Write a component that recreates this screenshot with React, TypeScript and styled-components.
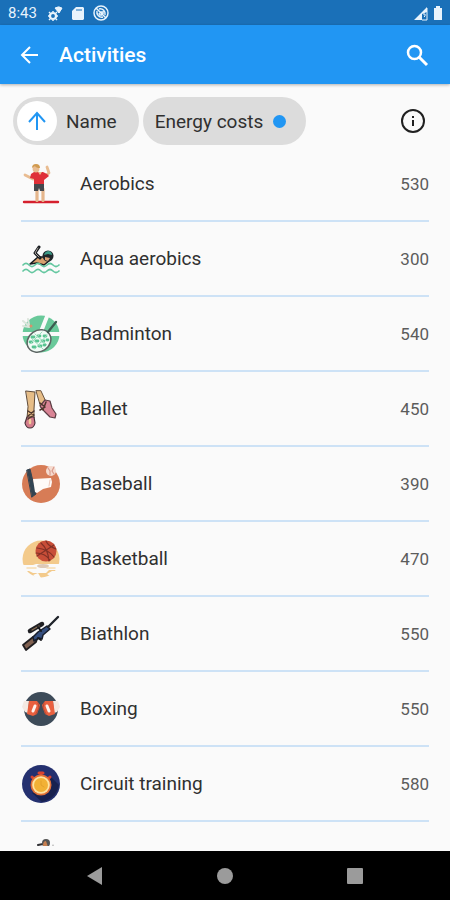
import React from "react";
import styled, { createGlobalStyle } from "styled-components";

const GlobalStyle = createGlobalStyle`
  * { box-sizing: border-box; }
  body { margin: 0; background: #fafafa; font-family: Roboto, "Liberation Sans", sans-serif; }
  button { font: inherit; color: inherit; border: 0; padding: 0; background: none; cursor: pointer; }
  svg { display: block; flex: none; }
`;

const Screen = styled.div`
  display: flex;
  flex-direction: column;
  height: 100vh;
  overflow: hidden;
  color: #303030;
`;

const StatusBar = styled.div`
  display: flex;
  align-items: center;
  gap: 8px;
  flex: none;
  height: 25px;
  padding: 1px 7px 0 8px;
  background: #1a70b8;
  color: #e8f3fc;
  font-size: 15px;
`;

const StatusGroup = styled.div<{ $end?: boolean }>`
  display: flex;
  align-items: center;
  gap: ${(p) => (p.$end ? 5 : 8)}px;
  margin-left: ${(p) => (p.$end ? "auto" : "3px")};
`;

const AppBar = styled.header`
  display: flex;
  align-items: center;
  flex: none;
  height: 59px;
  padding: 0 20px 0 18px;
  background: #2196f3;
  color: #fff;
  box-shadow: 0 1px 3px rgba(0, 0, 0, 0.3);
  z-index: 1;
`;

const Title = styled.h1`
  flex: 1;
  margin: 0 0 0 17px;
  font-size: 21px;
  font-weight: 500;
  line-height: 24px;
`;

const IconButton = styled.button`
  display: flex;
  align-items: center;
  justify-content: center;
`;

const SortBar = styled.div`
  display: flex;
  align-items: center;
  gap: 4px;
  flex: none;
  padding: 13px 23px 2px 13px;
  & > :last-child { margin-left: auto; }
`;

const Chip = styled.button<{ $leading?: boolean }>`
  display: flex;
  align-items: center;
  gap: ${(p) => (p.$leading ? 9 : 10)}px;
  height: 48px;
  padding: ${(p) => (p.$leading ? "0 22px 0 4px" : "0 20px 0 12px")};
  border-radius: 24px;
  background: #dcdcdc;
  font-size: 19px;
`;

const ChipAvatar = styled.span`
  display: flex;
  align-items: center;
  justify-content: center;
  width: 40px;
  height: 40px;
  border-radius: 50%;
  background: #fff;
`;

const Dot = styled.span`
  width: 13px;
  height: 13px;
  border-radius: 50%;
  background: #2196f3;
`;

const Main = styled.main`
  flex: 1;
  min-height: 0;
  padding-bottom: 5px;
`;

const List = styled.ul`
  height: 100%;
  margin: 0;
  padding: 0 21px;
  overflow: hidden;
  list-style: none;
`;

const Row = styled.li`
  display: flex;
  align-items: center;
  height: 75px;
  border-bottom: 2px solid #cde2f6;
`;

const Name = styled.span`
  flex: 1;
  margin-left: 19px;
  font-size: 19px;
`;

const Cost = styled.span`
  font-size: 17px;
  color: #5c5c5c;
`;

const NavBar = styled.nav`
  display: flex;
  align-items: center;
  justify-content: space-around;
  flex: none;
  height: 49px;
  padding: 0 30px;
  background: #000;
  color: #9b9b9b;
`;

const Art = ({ children }: { children: React.ReactNode }) => (
  <svg width="40" height="40" viewBox="0 0 40 40" aria-hidden="true" fill="none" strokeLinecap="round" strokeLinejoin="round">
    {children}
  </svg>
);

const Aerobics = () => (
  <Art>
    <path d="M3 38H37" stroke="#d5202d" strokeWidth="2.4" />
    <path d="M16 25v11.5M22 25v11.5" stroke="#e5b68c" strokeWidth="3.2" />
    <path d="M12 15 4 11M23 13 28 9 26 3" stroke="#e9bc91" strokeWidth="2.8" />
    <path d="M13 8h9l4 2 2 2-5 4v5H13v-6l-4-1 1-4z" fill="#df3038" />
    <path d="M17 8h4l-2 3z" fill="#e9bc91" />
    <path d="M13 20h10v7h-4l-1-3-1 3h-4z" fill="#44484d" />
    <circle cx="15" cy="5" r="3.4" fill="#e9bc91" />
    <path d="M11 4q0-4 4-4 4 0 4 4-4 0-5-2z" fill="#d19b50" />
  </Art>
);

const AquaAerobics = () => (
  <Art>
    <path d="M9 25 17 18 24 18 28 22 23 26 16 24z" fill="#d8a06e" stroke="#171b1f" strokeWidth="1.5" />
    <path d="M19 19 14 14 18 8" stroke="#171b1f" strokeWidth="3" />
    <path d="M18 18 14 14 17 9" stroke="#a8a09c" strokeWidth="1" />
    <circle cx="27" cy="17" r="5.500" fill="#20262a" />
    <path d="M23 16q1-4 5-4 3 1 3 4l-4-1z" fill="#3c9a86" />
    <path d="m24 18 5 1-2 3-3-1z" fill="#dba075" />
    <path d="M2 26q3-3 6 0t6 0 6 0 6 0 6 0 6 0M2 32q3-3 6 0t6 0 6 0 6 0 6 0 6 0" stroke="#64c7a0" strokeWidth="1.7" />
  </Art>
);

const Badminton = () => (
  <Art>
    <circle cx="20" cy="20" r="18.500" fill="#69c99a" />
    <path d="m27 0-8 20M0 20h40" stroke="#fafafa" strokeWidth="4" strokeLinecap="butt" />
    <path d="m2 7 6 5M2 12l6 1M7 5l1 6" stroke="#dce5dc" strokeWidth="2" />
    <circle cx="10" cy="12" r="1.5" fill="#d9906c" />
    <ellipse cx="18" cy="27" rx="12.500" ry="10.500" transform="rotate(-35 18 27)" fill="#f2fbf6" stroke="#5c6563" strokeWidth="1.5" />
    <path d="M11 23h2M17 22h2M23 22h2M9 28h2M15 27h2M21 27h2M26 26h1M12 33h2M18 32h2M23 31h1" stroke="#58c491" strokeWidth="2.8" />
    <path d="m10 24 12 11M14 20l12 11M9 30l12-12M14 35l12-14" stroke="#9bdbbb" strokeWidth="1" />
    <path d="m27 18 8-10" stroke="#3c5c50" strokeWidth="2.3" />
  </Art>
);

const Ballet = () => (
  <Art>
    <path d="M15 2 20 19 26 15 20 2z" fill="#e6bd87" stroke="#6a5440" />
    <path d="m5 2 9 1-1 17 0 9H6l1-11z" fill="#e6bd87" stroke="#5e4b3b" />
    <path d="m6 28 7 0 1 6q-1 5-5 5t-5-5z" fill="#d47c8c" stroke="#493239" strokeWidth="1.2" />
    <path d="m19 17 5-6 5 1 2 7 4 6-1 4-5-1-6-6z" fill="#d98495" stroke="#5b3d44" strokeWidth="1.2" />
    <path d="m7 22 6 4-6 4m6-8-6 5m12-13 5 4-5 3m6-8-3 8" stroke="#4d352c" strokeWidth="1.5" />
    <path d="m9 31 0 3" stroke="#f1ce99" strokeWidth="2.5" />
  </Art>
);

const Baseball = () => (
  <Art>
    <circle cx="20" cy="20" r="19" fill="#d77c56" />
    <path d="m6 6 3-1 6 25-4 3z" fill="#344451" stroke="#344451" />
    <path d="m12 15 18-1 1 4-1 5-8 2-6 4-2-1z" fill="#fffaf7" />
    <path d="m29 16-1 6" stroke="#efc9bb" />
    <circle cx="30" cy="7" r="5" fill="#f6dbcf" />
    <path d="m27 4 2 3v4m4-8-2 4 2 3" stroke="#d99a8c" strokeWidth="1.2" />
  </Art>
);

const Basketball = () => (
  <Art>
    <circle cx="20" cy="20" r="18.500" fill="#f3ca8b" />
    <path d="M0 26h12l3-1h25v6H28l-3 3H12l-4-2H0zM12 36l5-2 3 5h-5zM26 35l5-3h7l-6 7z" fill="#fafafa" />
    <path d="M6 29h9M26 29h8" stroke="#f7ddb2" strokeWidth="1.5" />
    <ellipse cx="22" cy="27" rx="6" ry="2" fill="#ddc9b7" />
    <circle cx="25" cy="12" r="10.500" fill="#c84e38" />
    <path d="M16 17 33 6M16 9q11 1 17 9M20 4q7 6 8 18M15 14q9 0 14 7M25 2q2 5 10 8" stroke="#823126" strokeWidth="1.2" />
  </Art>
);

const Biathlon = () => (
  <Art>
    <path d="m2 31 10-8 5-1-2 6-10 8z" fill="#806050" stroke="#201e20" strokeWidth="1.8" />
    <path d="m12 23 5-5 9-6 3 3-7 6-1 4-3-1-5 3z" fill="#344e7e" stroke="#171d2b" strokeWidth="1.5" />
    <path d="m27 13 9-9 1-1" stroke="#20242b" strokeWidth="2.4" />
    <path d="m9 17 12-7" stroke="#202024" strokeWidth="4.500" />
    <path d="m11 16 7-4" stroke="#8b7055" strokeWidth="1.3" />
    <path d="m17 13 3 4M17 24l3 2" stroke="#17191d" strokeWidth="2" />
  </Art>
);

const Boxing = () => (
  <Art>
    <circle cx="20" cy="20" r="17" fill="#3d4b59" />
    <path d="m3 12 5 0-1 12-3-1-3-5zM37 12h-5l1 12 3-1 3-5z" fill="#f4e9e2" />
    <path d="m8 12 8 0 3 4-3 9-4 2-6-2zM32 12h-8l-3 4 3 9 4 2 6-2z" fill="#e9603f" />
    <path d="m14 17-2 5M26 17l2 5" stroke="#fff3ed" strokeWidth="3" />
    <path d="m17 14 1 5-3 6M23 14l-1 5 3 6" stroke="#b84933" />
  </Art>
);

const CircuitTraining = () => (
  <Art>
    <circle cx="20" cy="20" r="19" fill="#24306f" />
    <path d="m29 12 9 9q-3 14-17 17L11 29z" fill="#18214f" />
    <path d="M18 9h4M20 9v5M11 13l2 2M29 13l-2 2" stroke="#d94331" strokeWidth="3" />
    <circle cx="20" cy="21" r="10.500" fill="#e27036" />
    <circle cx="20" cy="21" r="8.800" fill="#ffe3a1" />
    <circle cx="20" cy="21" r="7" fill="#f2b136" />
    <path d="m20 17v4l3 2" stroke="#e4a02b" />
  </Art>
);

const Climbing = () => (
  <Art>
    <path d="m17 6 5-1 2-3" stroke="#303034" strokeWidth="2" />
    <circle cx="25" cy="4" r="4" fill="#555" />
    <path d="M22 7q0-5 3-5l2 6z" fill="#c88051" />
    <path d="M32 6v1" stroke="#999" />
  </Art>
);

const activities = [
  { name: "Aerobics", cost: 530, Icon: Aerobics },
  { name: "Aqua aerobics", cost: 300, Icon: AquaAerobics },
  { name: "Badminton", cost: 540, Icon: Badminton },
  { name: "Ballet", cost: 450, Icon: Ballet },
  { name: "Baseball", cost: 390, Icon: Baseball },
  { name: "Basketball", cost: 470, Icon: Basketball },
  { name: "Biathlon", cost: 550, Icon: Biathlon },
  { name: "Boxing", cost: 550, Icon: Boxing },
  { name: "Circuit training", cost: 580, Icon: CircuitTraining },
];

export default function App() {
  return (
    <Screen>
      <GlobalStyle />
      <StatusBar>
        <span>8:43</span>
        <StatusGroup>
          <svg width="15" height="15" viewBox="0 0 15 15" fill="none" stroke="currentColor">
            <circle cx="5" cy="10" r="3" strokeWidth="2.200" />
            <path d="M5 5v1M5 14v1M0 10h1M9 10h1M2 7l-1-1M8 13l1 1M2 13l-1 1M8 7l1-1" strokeWidth="1.500" />
            <path d="m7 2 3-1 4 1-3 5z" fill="currentColor" />
            <circle cx="11" cy="3" r="2" fill="currentColor" />
          </svg>
          <svg width="14" height="15" viewBox="0 0 14 15">
            <path d="M5 1h7l1 1v11l-1 1H2l-1-1V5z" fill="currentColor" />
            <path d="M6 3v2M8 3v2M10 3v2" stroke="#1a70b8" />
          </svg>
          <svg width="16" height="16" viewBox="0 0 16 16" fill="none" stroke="currentColor" strokeWidth="1.500">
            <circle cx="8" cy="8" r="7" />
            <path d="m3 3 10 10M4 6a5 5 0 0 0 6 6M6 4a5 5 0 0 1 6 6M7 7l3 0v2M6 8l1 2h2" />
          </svg>
        </StatusGroup>
        <StatusGroup $end>
          <svg width="15" height="15" viewBox="0 0 15 15" fill="currentColor">
            <path d="M1 14 14 1v5L9 8v6z" />
            <path d="M14 2v12H9M10 8h2v2l-1 1" fill="none" stroke="currentColor" />
          </svg>
          <svg width="10" height="15" viewBox="0 0 10 15" fill="currentColor">
            <path d="M3 0h4v2h2v12H1V2h2z" />
          </svg>
        </StatusGroup>
      </StatusBar>
      <AppBar>
        <IconButton aria-label="Back">
          <svg width="24" height="24" viewBox="0 0 24 24" fill="none" stroke="currentColor" strokeWidth="2">
            <path d="M20 12H5M12 4l-8 8 8 8" />
          </svg>
        </IconButton>
        <Title>Activities</Title>
        <IconButton aria-label="Search">
          <svg width="26" height="26" viewBox="0 0 26 26" fill="none" stroke="currentColor" strokeWidth="2.500">
            <circle cx="10.500" cy="10.500" r="6.500" />
            <path d="m15 15 8 8" strokeWidth="3" />
          </svg>
        </IconButton>
      </AppBar>
      <SortBar>
        <Chip $leading>
          <ChipAvatar>
            <svg width="24" height="24" viewBox="0 0 24 24" fill="none" stroke="#2196f3" strokeWidth="2">
              <path d="M12 21V4M4 13l8-9 8 9" />
            </svg>
          </ChipAvatar>
          Name
        </Chip>
        <Chip>
          Energy costs
          <Dot />
        </Chip>
        <IconButton aria-label="Information">
          <svg width="28" height="28" viewBox="0 0 28 28" fill="none" stroke="#202020" strokeWidth="2">
            <circle cx="14" cy="14" r="11" />
            <path d="M14 13v6M14 9v2" />
          </svg>
        </IconButton>
      </SortBar>
      <Main>
        <List>
          {activities.map(({ name, cost, Icon }) => (
            <Row key={name}>
              <Icon />
              <Name>{name}</Name>
              <Cost>{cost}</Cost>
            </Row>
          ))}
          <Row>
            <Climbing />
          </Row>
        </List>
      </Main>
      <NavBar>
        <IconButton aria-label="System back">
          <svg width="20" height="20" viewBox="0 0 20 20" fill="currentColor">
            <path d="m2 10 15-9v18z" />
          </svg>
        </IconButton>
        <IconButton aria-label="Home">
          <svg width="20" height="20" viewBox="0 0 20 20" fill="currentColor">
            <circle cx="10" cy="10" r="8" />
          </svg>
        </IconButton>
        <IconButton aria-label="Recent apps">
          <svg width="20" height="20" viewBox="0 0 20 20" fill="currentColor">
            <rect x="2" y="2" width="16" height="16" rx="1" />
          </svg>
        </IconButton>
      </NavBar>
    </Screen>
  );
}
